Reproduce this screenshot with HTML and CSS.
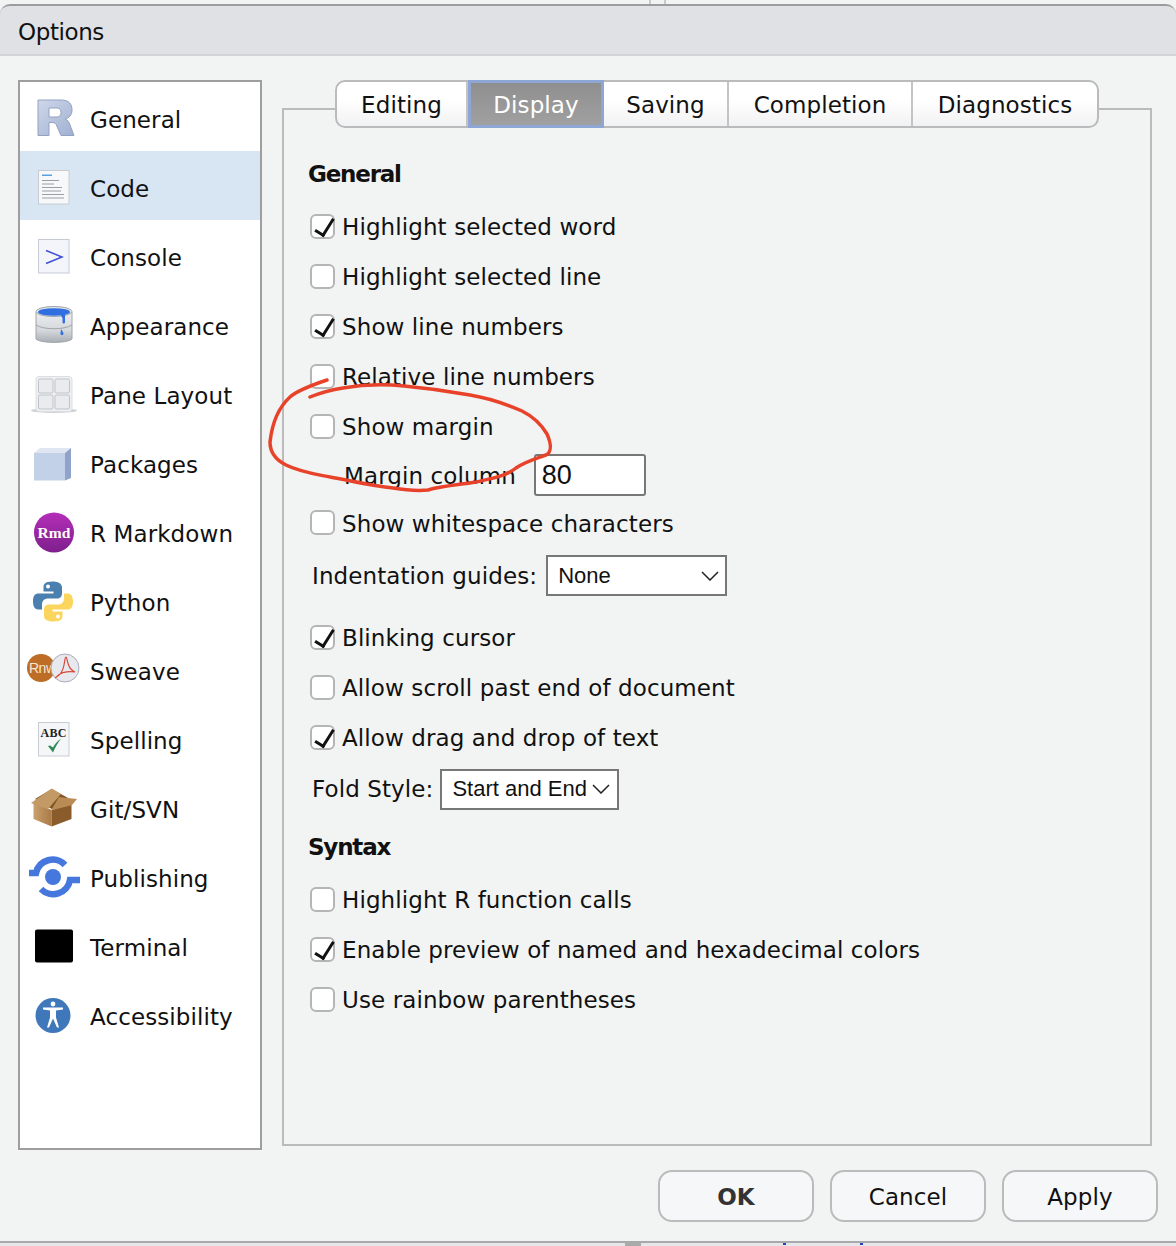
FILE: index.html
```html
<!DOCTYPE html>
<html lang="en">

<head>
    <meta charset="UTF-8">
    <title>Options</title>
    <link rel="stylesheet" href="styles.css">
</head>

<body>
    <div id="window">
        <div class="titlebar">Options</div>
        <div class="content">
            <div class="sidebar">
                <div class="nav-item">
                    <svg class="nav-icon" viewBox="0 0 60 44">
                        <defs>
                            <linearGradient id="rGrad" x1="0" y1="0" x2="1" y2="1">
                                <stop offset="0" stop-color="#cfd7e9" />
                                <stop offset="1" stop-color="#9fb0d2" />
                            </linearGradient>
                        </defs>
                        <path d="M14 5h23c8 0 11 4 11 10 0 5-3 8-7 9 3 1 4 3 5 6l4 10.500H37l-4-9c-1-3-2-4-5-4h-3v13H14z M25 13v9h8c3 0 4-2 4-4.500S36 13 33 13z" fill="url(#rGrad)" fill-rule="evenodd" stroke="#93a2c0" stroke-width="1" />
                    </svg>
                    <span>General</span>
                </div>
                <div class="nav-item selected">
                    <svg class="nav-icon" viewBox="0 0 60 44">
                        <rect x="14.500" y="6.500" width="30.500" height="33.500" fill="#f7f8fa" stroke="#c8ccd2" />
                        <rect x="18" y="10.500" width="10" height="1.500" fill="#5aa0dc" />
                        <g fill="#9a9fa6">
                            <rect x="18" y="16" width="17" height="1" />
                            <rect x="18" y="19.500" width="12" height="1" />
                            <rect x="18" y="23" width="20" height="1" />
                            <rect x="18" y="26.500" width="19" height="1" />
                            <rect x="18" y="30" width="22" height="1" />
                            <rect x="18" y="33.500" width="22" height="1" />
                        </g>
                    </svg>
                    <span>Code</span>
                </div>
                <div class="nav-item">
                    <svg class="nav-icon" viewBox="0 0 60 44">
                        <rect x="14.500" y="6.500" width="30.500" height="33.500" fill="#f3f5fb" stroke="#c6cad4" />
                        <path d="M22 17.500l16 6.500-16 6.500" fill="none" stroke="#3f4fd8" stroke-width="1.500" />
                    </svg>
                    <span>Console</span>
                </div>
                <div class="nav-item">
                    <svg class="nav-icon" viewBox="0 0 60 44">
                        <defs>
                            <linearGradient id="canGrad" x1="0" y1="0" x2="0" y2="1">
                                <stop offset="0" stop-color="#eceef0" />
                                <stop offset="0.6" stop-color="#d5d8dc" />
                                <stop offset="1" stop-color="#a9aeb5" />
                            </linearGradient>
                        </defs>
                        <path d="M12 10v27c4 4.500 32 4.500 36 0V10z" fill="url(#canGrad)" stroke="#a0a5ac" />
                        <ellipse cx="30" cy="9.500" rx="18" ry="5" fill="#e4e6e8" stroke="#a0a5ac" />
                        <ellipse cx="30" cy="10" rx="16" ry="3.800" fill="#2f6fe0" />
                        <path d="M37 11h4v9c0 2-2.500 2-2.500 0v-4c-1-1-1.500-2-1.500-5z M37 27c1 2 2.500 3 2.500 4.500 0 2-3 2-3 0z" fill="#2f6fe0" />
                        <path d="M12 23c8 5 28 5 36 0" fill="none" stroke="#a0a5ac" />
                    </svg>
                    <span>Appearance</span>
                </div>
                <div class="nav-item">
                    <svg class="nav-icon" viewBox="0 0 60 44">
                        <ellipse cx="30" cy="39.500" rx="23" ry="2.500" fill="#cfd1d4" />
                        <rect x="12" y="5.500" width="36" height="35" rx="3" fill="#eef0f2" stroke="#dcdfe2" />
                        <rect x="14.500" y="8" width="14.500" height="14" rx="1.500" fill="#e9ebee" stroke="#bfc3c9" />
                        <rect x="31" y="8" width="14.500" height="14" rx="1.500" fill="#e9ebee" stroke="#bfc3c9" />
                        <rect x="14.500" y="24" width="14.500" height="14" rx="1.500" fill="#e9ebee" stroke="#bfc3c9" />
                        <rect x="31" y="24" width="14.500" height="14" rx="1.500" fill="#e9ebee" stroke="#bfc3c9" />
                    </svg>
                    <span>Pane Layout</span>
                </div>
                <div class="nav-item">
                    <svg class="nav-icon" viewBox="0 0 60 44">
                        <path d="M10 13l6-5h31l-6 5z" fill="#dfe6f2" />
                        <path d="M10 13h31v27.500H10z" fill="#c2d0e8" />
                        <path d="M41 13l6-5v30l-6 2.500z" fill="#8fa3cb" />
                    </svg>
                    <span>Packages</span>
                </div>
                <div class="nav-item">
                    <svg class="nav-icon" viewBox="0 0 60 44">
                        <defs>
                            <linearGradient id="rmdGrad" x1="0" y1="0" x2="0" y2="1">
                                <stop offset="0" stop-color="#b42eb8" />
                                <stop offset="1" stop-color="#7e1f8c" />
                            </linearGradient>
                        </defs>
                        <circle cx="30" cy="23.500" r="20" fill="url(#rmdGrad)" />
                        <text x="30" y="28.500" class="rmd-text">Rmd</text>
                    </svg>
                    <span>R Markdown</span>
                </div>
                <div class="nav-item">
                    <svg class="nav-icon" viewBox="0 0 60 44">
                        <path d="M28.500 3.500c-8 0-9 3-9 6v4h10v2H14c-4 0-5 4-5 8s1.500 8 5 8h4v-5c0-4 3-6 6-6h9c3 0 5-2 5-5V9.500c0-4-4-6-9.500-6z" fill="#4a7fb0" />
                        <path d="M29.500 43.500c8 0 9-3 9-6v-4h-10v-2H44c4 0 5-4 5-8s-1.500-8-5-8h-4v5c0 4-3 6-6 6h-9c-3 0-5 2-5 5v6.500c0 4 4 5.500 9.500 5.500z" fill="#fbd55e" />
                        <circle cx="24" cy="8.500" r="2" fill="#fff" />
                        <circle cx="34" cy="38.500" r="2" fill="#fff" />
                    </svg>
                    <span>Python</span>
                </div>
                <div class="nav-item">
                    <svg class="nav-icon" viewBox="0 0 60 44">
                        <circle cx="17" cy="21" r="14" fill="#bd6d26" />
                        <text x="5" y="26" class="rnw-text">Rnw</text>
                        <circle cx="41" cy="21" r="14" fill="#e7e9ee" stroke="#a9adb8" />
                        <path d="M31 31c4-2 8-7 9-13 1-5 1-8 2-8s1 5 3 9c1 3 4 5 6 6-5-1-12 0-15 2-2 1-3 3-5 4z" fill="none" stroke="#d8493a" stroke-width="1.200" />
                    </svg>
                    <span>Sweave</span>
                </div>
                <div class="nav-item">
                    <svg class="nav-icon" viewBox="0 0 60 44">
                        <rect x="14.500" y="6.500" width="30.500" height="33.500" fill="#f4f6f8" stroke="#c8ccd2" />
                        <text x="29.700" y="20.500" class="abc-text">ABC</text>
                        <path d="M24 30l5 6.500c2-5 5-10 8-14-4 3-6.500 6-8 9l-3-2z" fill="#2e8b57" />
                    </svg>
                    <span>Spelling</span>
                </div>
                <div class="nav-item">
                    <svg class="nav-icon" viewBox="0 0 60 44">
                        <defs>
                            <linearGradient id="boxGrad" x1="0" y1="0" x2="1" y2="0">
                                <stop offset="0" stop-color="#c9a06e" />
                                <stop offset="1" stop-color="#a87a46" />
                            </linearGradient>
                        </defs>
                        <path d="M11 14L27.700 4 46 14 27.700 24z" fill="#7f5526" />
                        <path d="M9.500 18l18.200 7v16.500L9.500 34z" fill="url(#boxGrad)" />
                        <path d="M27.700 25L47.500 17v17l-19.800 7.500z" fill="#8a5c2c" />
                        <path d="M7 18L27.700 3.500 37 9 24 24z" fill="#c39a66" />
                        <path d="M27 25.500L35 12l18 2-5 6z" fill="#b98c56" />
                    </svg>
                    <span>Git/SVN</span>
                </div>
                <div class="nav-item">
                    <svg class="nav-icon" viewBox="0 0 60 44">
                        <circle cx="29" cy="23" r="8" fill="#4577dd" />
                        <path d="M5 19h7A17 17 0 0 1 41 11" fill="none" stroke="#4577dd" stroke-width="6.500" />
                        <path d="M56 26H46A17 17 0 0 1 17 35" fill="none" stroke="#4577dd" stroke-width="6.500" />
                    </svg>
                    <span>Publishing</span>
                </div>
                <div class="nav-item">
                    <svg class="nav-icon" viewBox="0 0 60 44">
                        <rect x="11" y="6.500" width="38" height="33" rx="2" fill="#000" />
                    </svg>
                    <span>Terminal</span>
                </div>
                <div class="nav-item">
                    <svg class="nav-icon" viewBox="0 0 60 44">
                        <circle cx="29" cy="23.500" r="17.500" fill="#3f78ba" />
                        <circle cx="29" cy="12" r="2.400" fill="#fff" />
                        <path d="M19 15.500h20v2l-7 1v7l3 10h-2l-4-9-4 9h-2l3-10v-7l-7-1z" fill="#fff" />
                    </svg>
                    <span>Accessibility</span>
                </div>
            </div>

            <div class="panel">
                <div class="tabs">
                    <div class="tab tab-editing">Editing</div>
                    <div class="tab tab-display">Display</div>
                    <div class="tab tab-saving">Saving</div>
                    <div class="tab tab-completion">Completion</div>
                    <div class="tab tab-diagnostics">Diagnostics</div>
                </div>

                <h2 class="heading heading-general">General</h2>
                <div class="row"><span class="check on"></span>Highlight selected word</div>
                <div class="row"><span class="check"></span>Highlight selected line</div>
                <div class="row"><span class="check on"></span>Show line numbers</div>
                <div class="row"><span class="check"></span>Relative line numbers</div>
                <div class="row"><span class="check"></span>Show margin</div>
                <div class="row row-column">
                    <label>Margin column</label>
                    <div class="text-input">80</div>
                </div>
                <div class="row row-whitespace"><span class="check"></span>Show whitespace characters</div>
                <div class="row row-guides">
                    <label>Indentation guides:</label>
                    <div class="select select-guides">None
                        <svg viewBox="0 0 18 10"><path d="M1 1l8 8 8-8" /></svg>
                    </div>
                </div>
                <div class="row row-blinking"><span class="check on"></span>Blinking cursor</div>
                <div class="row"><span class="check"></span>Allow scroll past end of document</div>
                <div class="row"><span class="check on"></span>Allow drag and drop of text</div>
                <div class="row row-fold">
                    <label>Fold Style:</label>
                    <div class="select select-fold">Start and End
                        <svg viewBox="0 0 18 10"><path d="M1 1l8 8 8-8" /></svg>
                    </div>
                </div>

                <h2 class="heading heading-syntax">Syntax</h2>
                <div class="row"><span class="check"></span>Highlight R function calls</div>
                <div class="row"><span class="check on"></span>Enable preview of named and hexadecimal colors</div>
                <div class="row"><span class="check"></span>Use rainbow parentheses</div>
            </div>
        </div>

        <div class="buttons">
            <div class="btn btn-ok">OK</div>
            <div class="btn">Cancel</div>
            <div class="btn">Apply</div>
        </div>
    </div>

    <!-- red pen mark drawn over the dialog -->
    <svg class="scribble" width="1176" height="1246" viewBox="0 0 1176 1246">
        <path d="M327 380C312 385 298 390 290 397C279 407 272 424 270 442C270 452 276 460 286 465C300 472 315 474 330 477C352 481 372 486 393 488C405 490 418 491 428 490C442 486 458 485 476 482C494 478 506 476 516 468C526 461 538 458 546 455C552 452 551 443 547 434C541 424 532 416 522 411C506 404 488 398 470 395C448 391 426 388 404 386C384 384 360 385 343 388C330 390 320 393 310 397" />
    </svg>
</body>

</html>
```

FILE: styles.css
```css
* {
    margin: 0;
    padding: 0;
    box-sizing: border-box;
}

body {
    width: 1176px;
    height: 1246px;
    overflow: hidden;
    background: linear-gradient(#2a3fc0, #2a3fc0) 783px 1243px / 3px 2px no-repeat,
        linear-gradient(#2a3fc0, #2a3fc0) 860px 1243px / 3px 2px no-repeat,
        linear-gradient(#aaa, #aaa) 625px 1243px / 16px 3px no-repeat,
        #e6e7e8;
    font-family: "DejaVu Sans", sans-serif;
    font-size: 23px;
    letter-spacing: 0.1px;
    color: #111;
    position: relative;
}

#window {
    height: 1243px;
    padding-top: 4px;
    background: linear-gradient(#c9caca, #c9caca) 649px 0 / 2px 4px no-repeat,
        linear-gradient(#c9caca, #c9caca) 664px 0 / 2px 4px no-repeat,
        #f2f4f3;
    border-bottom: 2px solid #a8a9aa;
}

.titlebar {
    height: 52px;
    padding: 0 18px;
    line-height: 52px;
    letter-spacing: -0.4px;
    background-color: #e0e1e5;
    border-top: 2px solid #9c9d9f;
    border-bottom: 2px solid #d3d4d7;
    border-top-left-radius: 10px;
    border-top-right-radius: 10px;
}

.content {
    display: flex;
    align-items: flex-start;
    padding: 24px 24px 0 18px;
}

.sidebar {
    width: 244px;
    height: 1070px;
    background-color: #fff;
    border: 2px solid #9e9e9e;
}

.nav-item {
    display: flex;
    align-items: center;
    height: 69px;
    padding-left: 4px;
}

.nav-item.selected {
    background-color: #d8e5f3;
}

.nav-item span {
    margin-left: 6px;
    padding-top: 6px;
}

.nav-icon {
    width: 60px;
    height: 44px;
    flex-shrink: 0;
}

.rmd-text {
    font: bold 15.500px "Liberation Serif", serif;
    fill: #fff;
    text-anchor: middle;
}

.rnw-text {
    font: 14px "Liberation Sans", sans-serif;
    letter-spacing: -0.5px;
    fill: #f4e6d4;
}

.abc-text {
    font: bold 12px "Liberation Serif", serif;
    letter-spacing: 0.3px;
    fill: #222;
    text-anchor: middle;
}

.panel {
    width: 870px;
    height: 1038px;
    margin: 28px 0 0 20px;
    padding-left: 26px;
    border: 2px solid #bbb;
}

.tabs {
    display: flex;
    width: 764px;
    height: 48px;
    margin: -30px 0 0 25px;
    background: linear-gradient(#fff 40%, #f1f2f3);
    border: 2px solid #bbb;
    border-radius: 10px;
}

.tab {
    display: flex;
    align-items: center;
    justify-content: center;
    border-right: 2px solid #c4c4c4;
    padding-top: 1px;
}

.tab-editing {
    width: 131px;
}

.tab-display {
    width: 136px;
    margin: -2px 0;
    border: 3px solid #8ea6d6;
    background: linear-gradient(#8f8f8f, #a0a0a0);
    color: #fff;
}

.tab-saving {
    width: 125px;
}

.tab-completion {
    width: 184px;
}

.tab-diagnostics {
    flex: 1;
    border-right: none;
}

.heading {
    height: 40px;
    line-height: 40px;
    font-size: 23px;
    font-weight: bold;
    letter-spacing: -1.200px;
    margin-left: -2px;
}

.heading-general {
    margin-top: 26px;
    margin-bottom: 7px;
}

.heading-syntax {
    margin-top: 11px;
    margin-bottom: 7px;
}

.row {
    display: flex;
    align-items: center;
    height: 50px;
    padding-top: 2px;
    white-space: nowrap;
}

.row-column {
    height: 48px;
    padding-left: 34px;
}

.row-whitespace {
    height: 49px;
    padding-top: 0;
}

.row-guides {
    height: 55px;
    padding: 0 0 0 2px;
}

.row-blinking {
    margin-top: 9px;
}

.row-fold {
    height: 54px;
    padding: 0 0 0 2px;
}

.check {
    display: block;
    position: relative;
    width: 25px;
    height: 25px;
    margin: -2px 7px 0 0;
    background-color: #fff;
    border: 2px solid #b5b5b5;
    border-radius: 6px;
    flex-shrink: 0;
}

.check.on::after {
    content: "";
    position: absolute;
    left: 7px;
    top: -1px;
    width: 8px;
    height: 18px;
    border: solid #111;
    border-width: 0 3px 3px 0;
    transform: rotate(32deg);
}

.text-input {
    width: 112px;
    height: 42px;
    margin: -2px 0 0 18px;
    padding-left: 6px;
    font: 27px/38px "Liberation Sans", sans-serif;
    letter-spacing: 0;
    background-color: #fff;
    border: 2px solid #777;
    border-radius: 3px;
}

.select {
    display: flex;
    align-items: center;
    justify-content: space-between;
    height: 41px;
    margin-left: 9px;
    font: 22px "Liberation Sans", sans-serif;
    letter-spacing: 0;
    background-color: #fff;
    border: 2px solid #777;
}

.select svg {
    width: 18px;
    height: 10px;
    fill: none;
    stroke: #222;
    stroke-width: 1.500;
}

.select-guides {
    width: 181px;
    padding: 0 6px 0 10px;
}

.select-fold {
    width: 179px;
    margin-left: 7px;
    padding: 0 7px 0 10px;
}

.buttons {
    display: flex;
    justify-content: flex-end;
    gap: 16px;
    padding: 20px 18px 0 0;
}

.btn {
    width: 156px;
    height: 52px;
    line-height: 50px;
    text-align: center;
    background-color: #f6f7f8;
    border: 2px solid #bbb;
    border-radius: 14px;
}

.btn-ok {
    font-weight: bold;
    color: #333;
}

.scribble {
    position: absolute;
    left: 0;
    top: 0;
    pointer-events: none;
}

.scribble path {
    fill: none;
    stroke: #e8432a;
    stroke-width: 3.500;
    stroke-linecap: round;
}
```
